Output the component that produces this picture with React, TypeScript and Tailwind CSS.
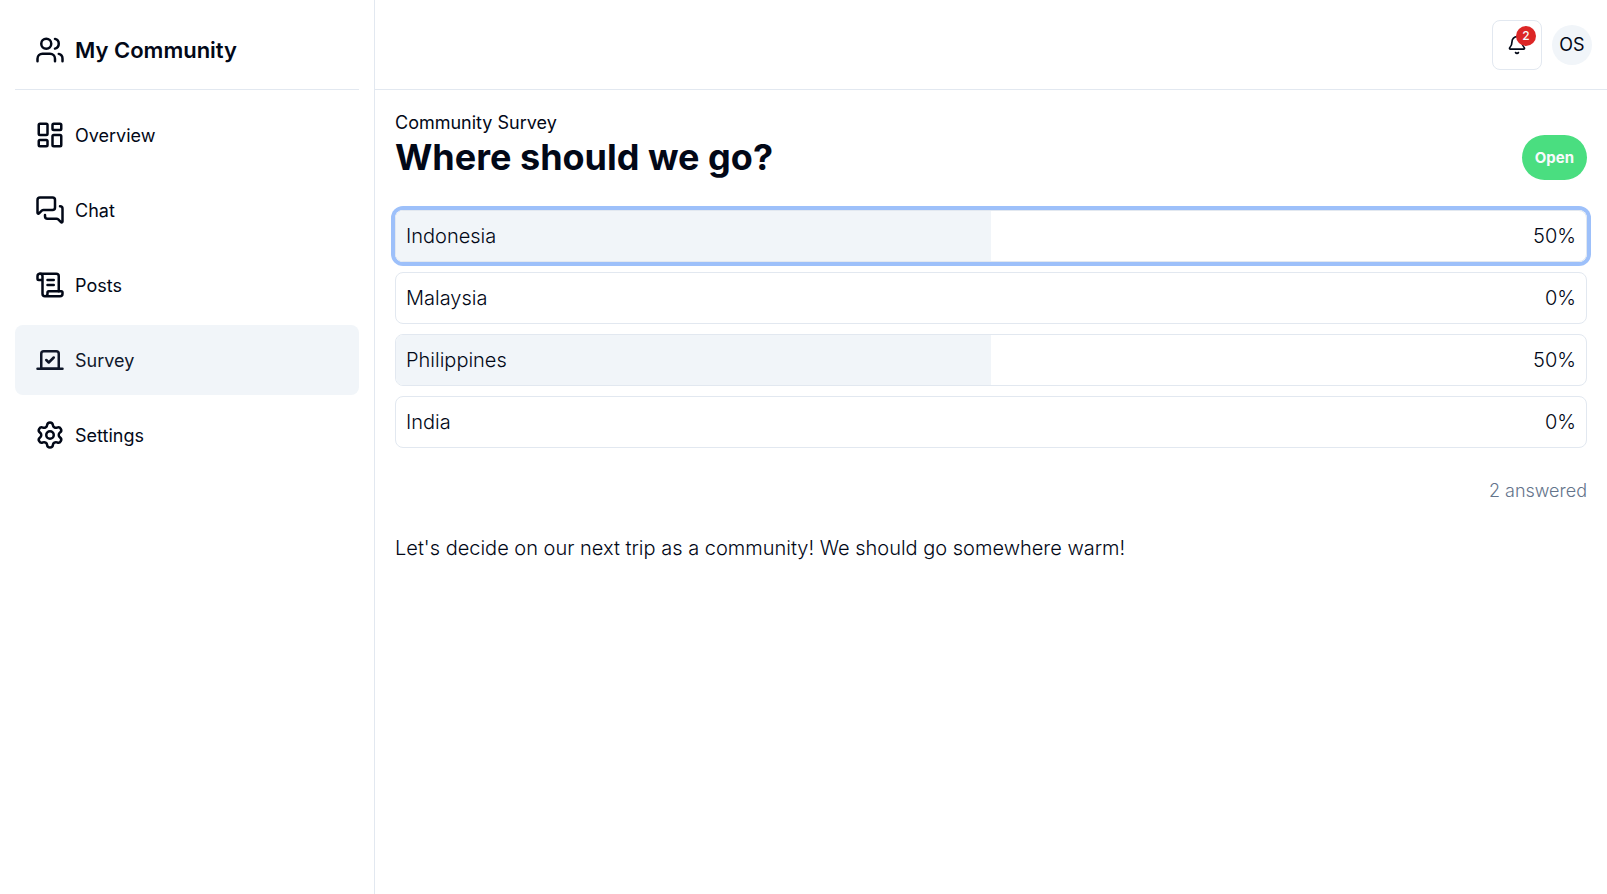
import { useState } from "react";
import {
  Bell,
  LayoutDashboard,
  MessagesSquare,
  ScrollText,
  Settings,
  Users,
  Vote,
} from "lucide-react";

const navigation = [
  { label: "Overview", icon: LayoutDashboard },
  { label: "Chat", icon: MessagesSquare },
  { label: "Posts", icon: ScrollText },
  { label: "Survey", icon: Vote },
  { label: "Settings", icon: Settings },
];

const options = [
  { name: "Indonesia", percent: 50 },
  { name: "Malaysia", percent: 0 },
  { name: "Philippines", percent: 50 },
  { name: "India", percent: 0 },
];

function Sidebar() {
  return (
    <aside className="w-[375px] shrink-0 border-r border-[#e2e8f0] px-[15px]">
      <div className="flex h-[90px] items-center gap-2.5 border-b border-[#e2e8f0] px-5 pt-2.5">
        <Users size={30} />
        <span className="text-[22px] leading-[34px] font-semibold">My Community</span>
      </div>
      <nav className="flex flex-col gap-[5px] pt-2.5">
        {navigation.map(({ label, icon: Icon }) => (
          <a
            key={label}
            href={"#" + label.toLowerCase()}
            aria-current={label === "Survey" ? "page" : undefined}
            className="flex h-[70px] items-center gap-2.5 rounded-lg px-5 text-lg leading-[25px] aria-[current=page]:bg-[#f1f5f9] aria-[current=page]:text-[#0f172a]"
          >
            <Icon size={30} />
            {label}
          </a>
        ))}
      </nav>
    </aside>
  );
}

function Header() {
  return (
    <header className="flex h-[90px] items-center justify-end gap-2.5 border-b border-[#e2e8f0] px-[15px]">
      <button
        type="button"
        aria-label="Notifications"
        className="relative flex size-[50px] items-center justify-center rounded-lg border border-[#e2e8f0]"
      >
        <Bell size={20} />
        <span className="absolute top-[5px] right-[5px] flex size-5 items-center justify-center rounded-full bg-[#dc2626] text-xs font-medium text-[#f8fafc]">
          2
        </span>
      </button>
      <button
        type="button"
        aria-label="Account"
        className="flex size-10 items-center justify-center rounded-full bg-[#f1f5f9] text-lg leading-[26px]"
      >
        OS
      </button>
    </header>
  );
}

export default function App() {
  const [selected, setSelected] = useState("Indonesia");

  return (
    <div className="flex min-h-screen bg-white font-['Inter',sans-serif] text-[#020817]">
      <Sidebar />
      <div className="flex min-w-0 flex-1 flex-col">
        <Header />
        <main className="flex flex-col p-5">
          <div className="flex items-end justify-between">
            <div>
              <p className="text-lg leading-[25px]">Community Survey</p>
              <h1 className="text-4xl leading-[45px] font-bold">Where should we go?</h1>
            </div>
            <span className="flex h-[45px] items-center rounded-full bg-[#4ade80] px-[13px] text-[15px] leading-5 font-bold text-[#f8fafc]">
              Open
            </span>
          </div>

          <div className="mt-[30px] flex flex-col gap-2.5">
            {options.map(({ name, percent }) => (
              <button
                key={name}
                type="button"
                aria-pressed={selected === name}
                onClick={() => setSelected(name)}
                className="relative flex h-[52px] items-center justify-between rounded-lg border border-[#e2e8f0] px-2.5 text-xl font-light aria-pressed:ring-4 aria-pressed:ring-[#9dc0fa]"
              >
                <span
                  className="absolute inset-y-0 left-0 rounded-l-[7px] bg-[#f1f5f9]"
                  style={{ width: percent + "%" }}
                />
                <span className="relative">{name}</span>
                <span className="relative">{percent}%</span>
              </button>
            ))}
          </div>

          <p className="mt-[30px] text-right text-lg leading-[25px] font-light text-[#64748b]">
            2 answered
          </p>
          <p className="mt-[30px] text-xl leading-[30px] font-light">
            Let's decide on our next trip as a community! We should go somewhere warm!
          </p>
        </main>
      </div>
    </div>
  );
}
